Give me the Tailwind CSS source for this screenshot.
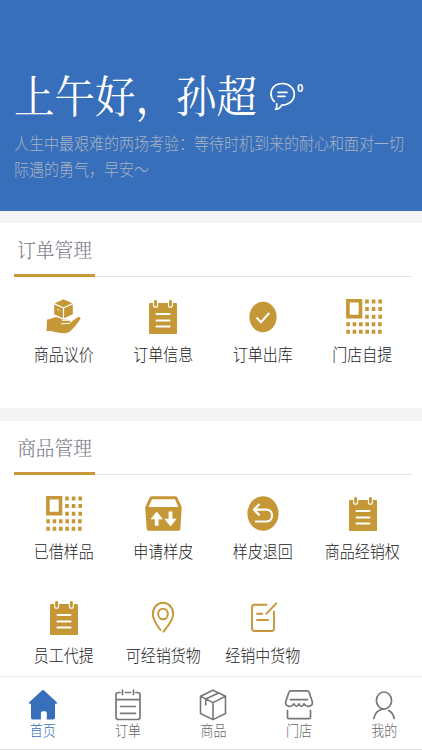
<!DOCTYPE html>
<html lang="zh-CN">
<head>
<meta charset="utf-8">
<meta name="viewport" content="width=device-width, initial-scale=1">
<title>首页</title>
<script src="https://cdn.jsdelivr.net/npm/@tailwindcss/browser@4"></script>
</head>
<body class="h-[750px] overflow-hidden bg-white font-['Noto_Sans_CJK_SC',sans-serif] font-light text-[#222]">
<svg class="hidden">
  <symbol id="list" viewBox="0 0 28 35">
    <path fill="#c59736" d="M1 4h26q1 0 1 1v29q0 1-1 1H1q-1 0-1-1V5q0-1 1-1z"/>
    <g fill="#c59736" stroke="#fff" stroke-width="1.100"><rect x="4.600" y=".4" width="4" height="7.800" rx="2"/><rect x="19.400" y=".4" width="4" height="7.800" rx="2"/></g>
    <path d="M7.500 15h13M7.500 21.500h13M7.500 27.500h13" stroke="#fff" stroke-width="2" stroke-linecap="round"/>
  </symbol>
  <symbol id="qr" viewBox="0 0 36 35">
    <path fill="none" stroke="#c59736" stroke-width="3.600" d="M1.900 1.800h12.600v15.800H1.900z"/>
    <path stroke="#c59736" stroke-width="4" stroke-dasharray="3.600 3" d="M19.200 2.400h17M19.200 10h17M19.200 17.700h17"/>
    <path stroke="#c59736" stroke-width="4" stroke-dasharray="3.600 2.750" d="M.3 25.300h36M.3 32.800h36"/>
  </symbol>
</svg>
<div class="flex h-full flex-col">
  <header class="h-[211px] shrink-0 bg-[#376fba] pl-[14px] pt-[68px]">
    <div class="flex h-[52px] items-center text-white">
      <h1 class="origin-center scale-y-110 whitespace-nowrap font-['Noto_Serif_CJK_SC','Noto_Sans_CJK_SC',serif] text-[40.5px] leading-[52px] font-normal">上午好，孙超</h1>
      <svg class="ml-[12px] mt-[3px] h-[30px] w-[27px] shrink-0" viewBox="0 0 27 30" fill="none" stroke="#fff" stroke-width="1.700" stroke-linecap="round" stroke-linejoin="round"><path d="M5.300 20.500C-1 14 2 2.500 13.500 2.500c6.500 0 11.800 4.500 11.800 10.600 0 7-5.700 10.800-12.600 11.100-1.200 2.400-3.200 4-6.200 4.300 1.300-1.500 1.600-3.100 1.200-5.700"/><path d="M9 11.300h9M9 15.300h7"/></svg>
      <span class="ml-px mt-[-13px] text-[11.5px] leading-3 font-bold font-['Liberation_Sans',sans-serif]">0</span>
    </div>
    <p class="mt-[10px] w-[394px] origin-top scale-y-[1.15] text-[15px] leading-[22.6px] text-[#a7b2c4]">人生中最艰难的两场考验：等待时机到来的耐心和面对一切际遇的勇气，早安～</p>
  </header>
  <div class="h-3 shrink-0 bg-[#f4f4f4]"></div>

  <section class="h-[185px] shrink-0 pl-[14px] pr-[10px]">
    <div class="flex h-[54px] items-end border-b border-[#e4e4e4]">
      <h2 class="-mb-px flex h-[54px] w-[81px] justify-center border-b-[3px] border-[#c9983a] pt-[13px]"><span class="block h-[26px] scale-y-110 whitespace-nowrap font-['Noto_Serif_CJK_SC','Noto_Sans_CJK_SC',serif] text-[18.7px] leading-[26px] font-light text-[#777983]">订单管理</span></h2>
    </div>
    <div class="grid grid-cols-4 pt-[22px] text-[15px]">
      <div class="flex flex-col items-center"><svg class="h-[35px] w-[36px]" viewBox="0 0 36 35" fill="#c59736"><path d="M17.500.3 26.300 4.200 17.500 8.200 8.700 4.200zM8.200 5.400l8.700 3.900v9.900l-8.700-4zM26.800 5.400l-8.700 3.900v9.900l8.700-4z"/><path stroke="#fff" stroke-width=".8" d="m11 10.200 2.800 1.200"/><path d="M1 20.500c3 .3 5-1.700 8-2.200 3-.4 5 .8 7.500 2.200l7 .5 1.500 2 6-4.200c1.500-1.400 3.800-.6 3.600.8-2.600 4.200-7 10.200-10.700 12.900-3.900 2.800-8 1.500-12.400 1-3.400-.4-6.500-1.800-11-1.300z"/><path fill="none" stroke="#fff" stroke-width="1" d="M16 21.300h7.300c2 .4 1.800 2.800-.2 3.200l-8 .3"/></svg><span class="mt-2 scale-y-[1.15] leading-6">商品议价</span></div>
      <div class="flex flex-col items-center"><svg class="h-[35px] w-7"><use href="#list"/></svg><span class="mt-2 scale-y-[1.15] leading-6">订单信息</span></div>
      <div class="flex flex-col items-center"><svg class="h-[35px] w-7" viewBox="0 0 28 35"><ellipse cx="14" cy="18" rx="13.600" ry="15.200" fill="#c59736"/><path fill="none" stroke="#fff" stroke-width="2" d="m7.500 18.500 4.500 4.700 8.300-9.400"/></svg><span class="mt-2 scale-y-[1.15] leading-6">订单出库</span></div>
      <div class="flex flex-col items-center"><svg class="ml-[3px] h-[35px] w-9"><use href="#qr"/></svg><span class="mt-2 scale-y-[1.15] leading-6">门店自提</span></div>
    </div>
  </section>
  <div class="h-[13px] shrink-0 bg-[#f4f4f4]"></div>

  <section class="h-[255px] shrink-0 pl-[14px] pr-[10px]">
    <div class="flex h-[54px] items-end border-b border-[#e4e4e4]">
      <h2 class="-mb-px flex h-[54px] w-[81px] justify-center border-b-[3px] border-[#c9983a] pt-[13px]"><span class="block h-[26px] scale-y-110 whitespace-nowrap font-['Noto_Serif_CJK_SC','Noto_Sans_CJK_SC',serif] text-[18.7px] leading-[26px] font-light text-[#777983]">商品管理</span></h2>
    </div>
    <div class="grid grid-cols-4 gap-y-[37px] pt-[21px] text-[15px]">
      <div class="flex flex-col items-center"><svg class="h-[35px] w-9"><use href="#qr"/></svg><span class="mt-2 scale-y-[1.15] leading-6">已借样品</span></div>
      <div class="flex flex-col items-center"><svg class="h-[35px] w-[37px]" viewBox="0 0 37 35"><path fill="#c59736" fill-rule="evenodd" d="M6.500.3h24q1.500 0 2 1.500l4.300 9.500-1.500 22q-.2 1.500-1.700 1.500H3.400q-1.500 0-1.700-1.500L.2 11.300l4.300-9.500q.5-1.500 2-1.500zM7 3.200 3.600 11h29.800L30 3.200z"/><path fill="#fff" d="M11.700 15.500 5.500 23.300h4.300v6.500h3.800v-6.500H18zM23.600 15.500v7.200h-4.300l6.200 7.800 6.200-7.800h-4.300v-7.200z"/></svg><span class="mt-2 scale-y-[1.15] leading-6">申请样皮</span></div>
      <div class="flex flex-col items-center"><svg class="h-[35px] w-8" viewBox="0 0 32 35"><ellipse cx="16" cy="17.500" rx="15.600" ry="17.300" fill="#c59736"/><path fill="none" stroke="#fff" stroke-width="2.200" d="M12.500 8 7 13.500l5.500 6M7.500 13.700h12.300c7 .3 7 11.500 0 11.800H8"/></svg><span class="mt-2 scale-y-[1.15] leading-6">样皮退回</span></div>
      <div class="flex flex-col items-center"><svg class="ml-[2px] h-[35px] w-7"><use href="#list"/></svg><span class="mt-2 scale-y-[1.15] whitespace-nowrap leading-6">商品经销权</span></div>
      <div class="flex flex-col items-center"><svg class="h-[35px] w-7"><use href="#list"/></svg><span class="mt-2 scale-y-[1.15] leading-6">员工代提</span></div>
      <div class="flex flex-col items-center"><svg class="h-[35px] w-6" viewBox="0 0 24 35" fill="none" stroke="#c59736" stroke-width="1.900" stroke-linecap="round"><path d="M9.500 30C6 25.500 1.800 20 1.800 14.300 1.800 7.500 6.300 2.800 12 2.800s10.200 4.700 10.200 11.500c0 6-5.700 12-9.700 17.500"/><ellipse cx="12" cy="14" rx="4.800" ry="5.300"/></svg><span class="mt-2 scale-y-[1.15] whitespace-nowrap leading-6">可经销货物</span></div>
      <div class="flex flex-col items-center"><svg class="ml-[2px] h-[35px] w-[26px]" viewBox="0 0 26 35" fill="none" stroke="#c59736" stroke-width="1.900" stroke-linecap="round"><path d="M15.500 4.700H3.500Q1 4.700 1 7.500v20.700Q1 31 3.500 31h17q2.500 0 2.500-2.800V11.500M25.300 3.300l-10 10.500M6 13.800h5.300M6 20h11"/></svg><span class="mt-2 scale-y-[1.15] whitespace-nowrap leading-6">经销中货物</span></div>
    </div>
  </section>

  <nav class="grid h-[74px] w-[427px] shrink-0 grid-cols-5 border-t border-b border-t-[#ececec] border-b-[#d8d8d8] bg-white pt-[12px] text-[13px] text-[#666]">
    <div class="flex flex-col items-center text-[#376fba]"><svg class="h-[32px] w-[30px]" viewBox="0 0 30 32" fill="#376fba"><path d="M13.600 1.700q1.400-1.200 2.800 0L29 13.500q.6 1-.6 1.200H27v13.800q0 2-2 2h-6.200V24q0-1.800-1.900-1.800h-2.100q-1.900 0-1.900 1.800v6.500H5q-2 0-2-2V14.700H1.600Q.4 14.500 1 13.500z"/></svg><span class="-mt-px scale-y-[1.15] leading-5">首页</span></div>
    <div class="flex flex-col items-center"><svg class="h-[32px] w-[28px]" viewBox="0 0 28 32" fill="none" stroke="#777" stroke-width="1.700" stroke-linecap="round"><path d="M6 3.500H4.500Q2 3.500 2 6v22q0 2.500 2.500 2.500h19Q26 30.500 26 28V6q0-2.500-2.500-2.500H22M11.500 3.500h5M8.500 1v4.500M19.500 1v4.500M2 10.700h24M6.500 17.500h15M6.500 24.300h15"/></svg><span class="-mt-px scale-y-[1.15] leading-5">订单</span></div>
    <div class="flex flex-col items-center"><svg class="h-[32px] w-[28px]" viewBox="0 0 28 32" fill="none" stroke="#777" stroke-width="1.600" stroke-linejoin="round"><path d="m14 1.300 12.500 6v17.200L14 30.600 1.500 24.500V7.300zM1.500 7.300 14 13.600l12.500-6.300M14 13.600v17M6.700 16.500V10L19.500 4"/></svg><span class="-mt-px scale-y-[1.15] leading-5">商品</span></div>
    <div class="flex flex-col items-center"><svg class="h-[32px] w-[30px]" viewBox="0 0 30 32" fill="none" stroke="#777" stroke-width="1.700" stroke-linecap="round" stroke-linejoin="round"><path d="M6.700 1.800h16.600q1.300 0 1.700 1.300l3.300 9.700c.7 4.500-5.500 6.500-8.300 2-1.300 3.500-3.700 3.500-5 0-1.300 3.500-3.700 3.500-5 0-2.800 4.500-9 2.500-8.300-2L5 3.100q.4-1.300 1.700-1.300zM6.500 10.700h17M3.500 21.500v6.700q0 1.500 1.500 1.500h20q1.500 0 1.500-1.500v-6.700"/></svg><span class="-mt-px scale-y-[1.15] leading-5">门店</span></div>
    <div class="flex flex-col items-center"><svg class="h-[32px] w-[24px]" viewBox="0 0 24 32" fill="none" stroke="#777" stroke-width="1.700" stroke-linecap="round"><ellipse cx="12" cy="11.500" rx="7.600" ry="8.500"/><path d="M1.800 29.500C2.500 24.500 6.500 20 12 20M16.800 21.500c2.700 1.600 4.800 4.500 5.400 8"/></svg><span class="-mt-px scale-y-[1.15] leading-5">我的</span></div>
  </nav>
</div>
</body>
</html>
